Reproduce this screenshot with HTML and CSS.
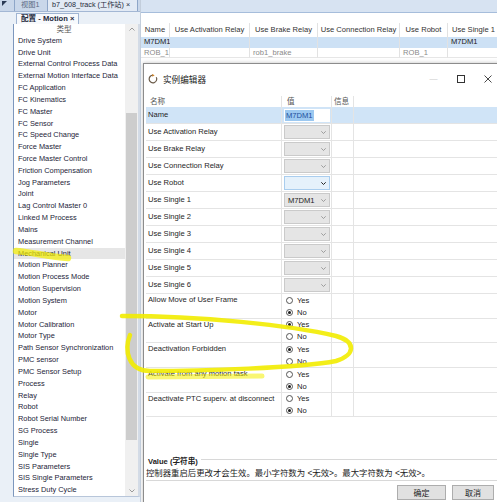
FILE: index.html
```html
<!DOCTYPE html>
<html>
<head>
<meta charset="utf-8">
<link rel="stylesheet" href="styles.css">
</head>
<body>
<div class="app">
  <div class="leftcol">
    <div class="tabs1">
      <span class="pin"><svg width="5" height="5" viewBox="0 0 5 5"><path d="M0 0 L5 0 L0 5 Z" fill="#2a3a55"/></svg></span>
      <span class="tab1 t-view">视图1</span>
      <span class="tab1 t-doc">b7_608_track (工作站) ×</span>
    </div>
    <div class="tabs2">
      <span class="tab2">配置 - Motion ×</span>
    </div>
    <div class="panelwrap">
      <div class="list">
        <div class="phead">类型</div>
        <div class="item">Drive System</div>
        <div class="item">Drive Unit</div>
        <div class="item">External Control Process Data</div>
        <div class="item">External Motion Interface Data</div>
        <div class="item">FC Application</div>
        <div class="item">FC Kinematics</div>
        <div class="item">FC Master</div>
        <div class="item">FC Sensor</div>
        <div class="item">FC Speed Change</div>
        <div class="item">Force Master</div>
        <div class="item">Force Master Control</div>
        <div class="item">Friction Compensation</div>
        <div class="item">Jog Parameters</div>
        <div class="item">Joint</div>
        <div class="item">Lag Control Master 0</div>
        <div class="item">Linked M Process</div>
        <div class="item">Mains</div>
        <div class="item">Measurement Channel</div>
        <div class="item sel">Mechanical Unit</div>
        <div class="item">Motion Planner</div>
        <div class="item">Motion Process Mode</div>
        <div class="item">Motion Supervision</div>
        <div class="item">Motion System</div>
        <div class="item">Motor</div>
        <div class="item">Motor Calibration</div>
        <div class="item">Motor Type</div>
        <div class="item">Path Sensor Synchronization</div>
        <div class="item">PMC sensor</div>
        <div class="item">PMC Sensor Setup</div>
        <div class="item">Process</div>
        <div class="item">Relay</div>
        <div class="item">Robot</div>
        <div class="item">Robot Serial Number</div>
        <div class="item">SG Process</div>
        <div class="item">Single</div>
        <div class="item">Single Type</div>
        <div class="item">SIS Parameters</div>
        <div class="item">SIS Single Parameters</div>
        <div class="item">Stress Duty Cycle</div>
      </div>
      <div class="vscroll">
        <div class="arrow"><svg width="6" height="4" viewBox="0 0 6 4"><path d="M0.5 3.5 L3 1 L5.5 3.5" fill="none" stroke="#9a9a9a" stroke-width="1"/></svg></div>
        <div class="track"><div class="thumb"></div></div>
        <div class="arrow"><svg width="6" height="4" viewBox="0 0 6 4"><path d="M0.5 0.5 L3 3 L5.5 0.5" fill="none" stroke="#9a9a9a" stroke-width="1"/></svg></div>
      </div>
    </div>
  </div>

  <div class="rightcol">
    <div class="docbar"></div>
    <div class="tgrid">
      <div class="th">Name</div>
      <div class="th">Use Activation Relay</div>
      <div class="th">Use Brake Relay</div>
      <div class="th">Use Connection Relay</div>
      <div class="th">Use Robot</div>
      <div class="th thl">Use Single 1</div>

      <div class="td r1">M7DM1</div>
      <div class="td r1"></div>
      <div class="td r1"></div>
      <div class="td r1"></div>
      <div class="td r1"></div>
      <div class="td r1">M7DM1</div>

      <div class="td r2">ROB_1</div>
      <div class="td r2"></div>
      <div class="td r2">rob1_brake</div>
      <div class="td r2"></div>
      <div class="td r2">ROB_1</div>
      <div class="td r2"></div>
    </div>

    <div class="dialog">
      <div class="titlebar">
        <span class="dicon"><svg width="10" height="10" viewBox="0 0 10 10"><path d="M8.3 3.2 A3.8 3.8 0 1 1 5 1.2" fill="none" stroke="#6a5a48" stroke-width="1.2"/><path d="M4.2 0 L6.6 1.3 L4.4 2.8 Z" fill="#d08020"/></svg></span>
        <span class="dtitle">实例编辑器</span>
        <span class="ctls">
          <span class="ctl cmin">—</span>
          <span class="ctl"><svg width="8" height="8" viewBox="0 0 8 8"><rect x="0.5" y="0.5" width="7" height="7" fill="none" stroke="#333" stroke-width="1"/></svg></span>
          <span class="ctl"><svg width="8" height="8" viewBox="0 0 8 8"><path d="M0.5 0.5 L7.5 7.5 M7.5 0.5 L0.5 7.5" stroke="#333" stroke-width="0.9"/></svg></span>
        </span>
      </div>

      <div class="pgrid">
        <div class="pc ph ph1">名称</div><div class="pc ph ph2">值</div><div class="pc ph ph3">信息</div><div class="pc ph"></div>

        <div class="pc lab sel">Name</div><div class="pc val sel"><span class="inp"><span class="hl">M7DM1</span></span></div><div class="pc sel"></div><div class="pc sel"></div>

        <div class="pc lab">Use Activation Relay</div><div class="pc val"><span class="dd"><span></span><svg width="5" height="3" viewBox="0 0 5 3"><path d="M0.3 0.3 L2.5 2.5 L4.7 0.3" fill="none" stroke="#8a8a8a" stroke-width="0.8"/></svg></span></div><div class="pc"></div><div class="pc"></div>
        <div class="pc lab">Use Brake Relay</div><div class="pc val"><span class="dd"><span></span><svg width="5" height="3" viewBox="0 0 5 3"><path d="M0.3 0.3 L2.5 2.5 L4.7 0.3" fill="none" stroke="#8a8a8a" stroke-width="0.8"/></svg></span></div><div class="pc"></div><div class="pc"></div>
        <div class="pc lab">Use Connection Relay</div><div class="pc val"><span class="dd"><span></span><svg width="5" height="3" viewBox="0 0 5 3"><path d="M0.3 0.3 L2.5 2.5 L4.7 0.3" fill="none" stroke="#8a8a8a" stroke-width="0.8"/></svg></span></div><div class="pc"></div><div class="pc"></div>
        <div class="pc lab">Use Robot</div><div class="pc val"><span class="dd hot"><span></span><svg width="5" height="3" viewBox="0 0 5 3"><path d="M0.3 0.3 L2.5 2.5 L4.7 0.3" fill="none" stroke="#222" stroke-width="1"/></svg></span></div><div class="pc"></div><div class="pc"></div>
        <div class="pc lab">Use Single 1</div><div class="pc val"><span class="dd"><span>M7DM1</span><svg width="5" height="3" viewBox="0 0 5 3"><path d="M0.3 0.3 L2.5 2.5 L4.7 0.3" fill="none" stroke="#8a8a8a" stroke-width="0.8"/></svg></span></div><div class="pc"></div><div class="pc"></div>
        <div class="pc lab">Use Single 2</div><div class="pc val"><span class="dd"><span></span><svg width="5" height="3" viewBox="0 0 5 3"><path d="M0.3 0.3 L2.5 2.5 L4.7 0.3" fill="none" stroke="#8a8a8a" stroke-width="0.8"/></svg></span></div><div class="pc"></div><div class="pc"></div>
        <div class="pc lab">Use Single 3</div><div class="pc val"><span class="dd"><span></span><svg width="5" height="3" viewBox="0 0 5 3"><path d="M0.3 0.3 L2.5 2.5 L4.7 0.3" fill="none" stroke="#8a8a8a" stroke-width="0.8"/></svg></span></div><div class="pc"></div><div class="pc"></div>
        <div class="pc lab">Use Single 4</div><div class="pc val"><span class="dd"><span></span><svg width="5" height="3" viewBox="0 0 5 3"><path d="M0.3 0.3 L2.5 2.5 L4.7 0.3" fill="none" stroke="#8a8a8a" stroke-width="0.8"/></svg></span></div><div class="pc"></div><div class="pc"></div>
        <div class="pc lab">Use Single 5</div><div class="pc val"><span class="dd"><span></span><svg width="5" height="3" viewBox="0 0 5 3"><path d="M0.3 0.3 L2.5 2.5 L4.7 0.3" fill="none" stroke="#8a8a8a" stroke-width="0.8"/></svg></span></div><div class="pc"></div><div class="pc"></div>
        <div class="pc lab">Use Single 6</div><div class="pc val"><span class="dd"><span></span><svg width="5" height="3" viewBox="0 0 5 3"><path d="M0.3 0.3 L2.5 2.5 L4.7 0.3" fill="none" stroke="#8a8a8a" stroke-width="0.8"/></svg></span></div><div class="pc"></div><div class="pc"></div>

        <div class="pc lab rr">Allow Move of User Frame</div><div class="pc radios rr"><span class="opt"><span class="rb"></span>Yes</span><span class="opt"><span class="rb on"></span>No</span></div><div class="pc rr"></div><div class="pc rr"></div>
        <div class="pc lab rr">Activate at Start Up</div><div class="pc radios rr"><span class="opt"><span class="rb on"></span>Yes</span><span class="opt"><span class="rb"></span>No</span></div><div class="pc rr"></div><div class="pc rr"></div>
        <div class="pc lab rr">Deactivation Forbidden</div><div class="pc radios rr"><span class="opt"><span class="rb on"></span>Yes</span><span class="opt"><span class="rb"></span>No</span></div><div class="pc rr"></div><div class="pc rr"></div>
        <div class="pc lab rr">Activate from any motion task</div><div class="pc radios rr"><span class="opt"><span class="rb"></span>Yes</span><span class="opt"><span class="rb on"></span>No</span></div><div class="pc rr"></div><div class="pc rr"></div>
        <div class="pc lab rr">Deactivate PTC superv. at disconnect</div><div class="pc radios rr"><span class="opt"><span class="rb"></span>Yes</span><span class="opt"><span class="rb on"></span>No</span></div><div class="pc rr"></div><div class="pc rr"></div>
      </div>

      <div class="info">
        <div class="info-title"><span>Value (字符串)</span></div>
        <div class="info-desc">控制器重启后更改才会生效。最小字符数为 &lt;无效&gt;。最大字符数为 &lt;无效&gt;。</div>
      </div>
      <div class="buttons">
        <span class="btn ok">确定</span>
        <span class="btn cancel">取消</span>
      </div>
    </div>
  </div>
</div>

<svg class="marker" width="497" height="502" viewBox="0 0 497 502">
  <path d="M16 251 C30 252, 50 257, 68 258" fill="none" stroke="#f4ee00" stroke-width="6.5" stroke-linecap="round" opacity="0.7"/>
  <path d="M148 377 L262 376" fill="none" stroke="#f4ee00" stroke-width="5" stroke-linecap="round" opacity="0.55"/>
  <path d="M122 316 C200 316, 290 325, 336 336 C357 342, 355 355, 336 361 C300 368, 200 371, 150 371 C128 371, 124 350, 130 335" fill="none" stroke="#f2ec00" stroke-width="4.5" stroke-linecap="round" opacity="0.9"/>
</svg>
</body>
</html>
```

FILE: styles.css
```css
* { box-sizing: border-box; margin: 0; padding: 0; }
html, body { width: 497px; height: 502px; overflow: hidden; }
body {
  font-family: "Liberation Sans", Arial, "Noto Sans CJK SC", sans-serif;
  font-size: 7.6px;
  color: #222;
  background: #fff;
  position: relative;
}
.app { display: flex; width: 497px; height: 502px; }

/* left column */
.leftcol { width: 140px; flex: none; background: #eaf0f7; display: flex; flex-direction: column; }
.tabs1 { height: 12px; background: #c9d7ea; display: flex; align-items: flex-start; border-bottom: 1px solid #a3b7d4; }
.pin { width: 14px; padding: 1px 0 0 2px; display: flex; }
.tab1 { height: 11px; line-height: 9px; font-size: 7.2px; color: #3b4a62; white-space: nowrap; border-right: 1px solid #8ea6c8; }
.t-view { width: 34px; padding-left: 6px; border-left: 1px solid #8ea6c8; color: #5a6a82; }
.t-doc { width: 90px; padding-left: 4px; background: #e2eaf5; color: #1f2b40; }
.tabs2 { height: 12px; padding-left: 16px; display: flex; align-items: flex-end; }
.tab2 { height: 11px; line-height: 10px; padding: 0 4px; font-weight: bold; color: #1e2a3c; background: #f7f9fc; border: 1px solid #9fb4d2; border-bottom: none; white-space: nowrap; }
.panelwrap { flex: 1; margin: 0 0 5px 13px; border-left: 1px solid #7d97bd; border-bottom: 1px solid #b8c6da; border-right: 2px solid #d3dbe6; background: #fff; display: flex; }
.list { width: 111px; flex: none; overflow: hidden; }
.phead { height: 11px; line-height: 11px; text-align: center; padding-right: 11px; color: #555; }
.item { height: 11.84px; line-height: 11.84px; padding-left: 4px; font-size: 7.4px; color: #1d2438; white-space: nowrap; overflow: hidden; }
.item.sel { background: #e6e6e6; }
.vscroll { width: 13px; flex: none; background: #f0f0f0; display: flex; flex-direction: column; }
.arrow { height: 11px; display: flex; align-items: center; justify-content: center; }
.track { flex: 1; padding: 78px 1px 0 1px; }
.thumb { height: 327px; background: #cdcdcd; }

/* right column */
.rightcol { flex: 1; display: flex; flex-direction: column; overflow: hidden; border-left: 1px solid #c3cedc; }
.docbar { height: 13px; flex: none; background: #d7e3f2; border-bottom: 1px solid #a6bddb; margin-bottom: 10px; }
.tgrid { display: grid; grid-template-columns: 29px 80px 68px 82px 48px 60px; flex: none; }
.th { height: 14px; line-height: 14px; text-align: center; color: #333; border-right: 1px solid #e2e2e2; white-space: nowrap; overflow: hidden; }
.th.thl { text-align: left; padding-left: 4px; }
.td { height: 10.5px; line-height: 10.5px; padding-left: 3px; border-right: 1px solid #e2e2e2; white-space: nowrap; }
.r1 { background: #cde1f5; color: #1a1a1a; }
.r2 { color: #8a8a8a; border-bottom: 1px solid #e6e6e6; }

.dialog { flex: none; width: 358px; height: 445px; margin: 5px 0 0 2px; background: #fff; border: 1px solid #8c8c8c; border-right: none; box-shadow: 0 0 4px rgba(0,0,0,0.25); }
.titlebar { height: 28px; display: flex; align-items: center; padding-top: 1px; }
.dicon { width: 10px; height: 10px; margin-left: 4px; display: flex; }
.dtitle { margin-left: 5px; font-size: 8.6px; color: #222; font-family: "Noto Sans CJK SC", sans-serif; }
.ctls { margin-left: auto; display: flex; }
.ctl { width: 27px; height: 14px; display: flex; align-items: center; justify-content: center; font-size: 8px; }
.cmin { color: #c8c8c8; }

.pgrid { margin: 4px 0 0 2px; display: grid; grid-template-columns: 136px 50px 22px 150px; }
.pc { height: 17px; border-right: 1px solid #e4e4e4; border-bottom: 1px solid #e4e4e4; white-space: nowrap; overflow: hidden; }
.ph { height: 11px; line-height: 11px; color: #555; border-bottom: none; }
.ph1 { padding-left: 4px; }
.ph2 { padding-left: 5px; }
.ph3 { padding-left: 2px; }
.lab { padding-left: 2px; line-height: 16px; color: #1e1e1e; }
.sel { background: #d0e4f7; }
.val { padding-left: 2px; display: flex; align-items: center; }
.inp { width: 46px; height: 13px; background: #fff; display: flex; align-items: center; padding-left: 1px; }
.hl { background: #9cc8f0; color: #1c4f9c; line-height: 11px; padding: 0 1px; }
.dd { width: 46px; height: 14px; background: #e5e5e5; border: 1px solid #cacaca; display: flex; align-items: center; justify-content: space-between; padding: 0 3px 0 3px; color: #222; }
.dd.hot { background: #e5f1fb; border-color: #a9cdee; }
.rr { height: 24.7px; }
.lab.rr { line-height: 12px; padding-top: 0; }
.radios { padding: 0 0 0 4px; display: flex; flex-direction: column; }
.opt { height: 12px; flex: none; display: flex; align-items: center; color: #222; }
.rb { width: 7px; height: 7px; border: 1px solid #555; border-radius: 50%; margin-right: 4px; background: #fff; display: flex; align-items: center; justify-content: center; }
.rb.on::after { content: ""; width: 3px; height: 3px; border-radius: 50%; background: #1a1a1a; }

.info { margin: 38px 0 0 2px; }
.info-title { height: 11px; display: flex; align-items: center; padding-left: 2px; }
.info-title span { font-weight: bold; color: #222; }
.info-title::after { content: ""; flex: 1; border-top: 1px solid #d8d8d8; margin: -2px 0 0 3px; }
.info-desc { height: 15px; line-height: 14px; font-size: 8.4px; color: #222; border-bottom: 1px solid #d8d8d8; white-space: nowrap; font-family: "Liberation Sans", "Noto Sans CJK SC", sans-serif; }
.buttons { margin-top: 4px; display: flex; justify-content: flex-end; gap: 6px; padding-right: 7px; }
.btn { height: 15px; display: flex; align-items: center; justify-content: center; background: #e1e1e1; border: 1px solid #adadad; font-size: 8px; color: #222; }
.ok { width: 49px; }
.cancel { width: 42px; }

.marker { position: absolute; left: 0; top: 0; pointer-events: none; }
```
